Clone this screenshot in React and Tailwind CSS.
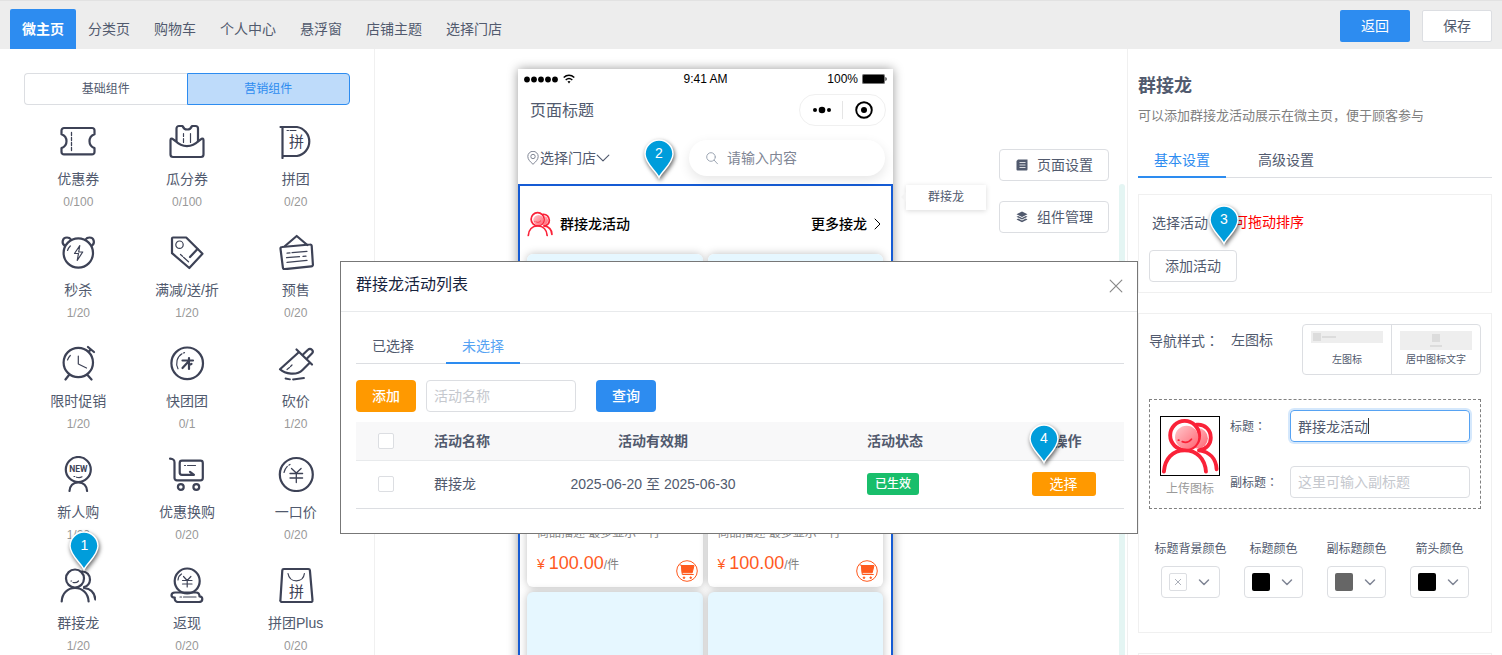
// src/pages/decorate/App.jsx
import { useState } from 'react';

// ─── Data ────────────────────────────────────────────────────────────────────
const NAV_TABS = ['微主页', '分类页', '购物车', '个人中心', '悬浮窗', '店铺主题', '选择门店'];

const WIDGETS = [
  { icon: 'coupon', name: '优惠券', count: '0/100' },
  { icon: 'split', name: '瓜分券', count: '0/100' },
  { icon: 'group', name: '拼团', count: '0/20' },
  { icon: 'seckill', name: '秒杀', count: '1/20' },
  { icon: 'discount', name: '满减/送/折', count: '1/20' },
  { icon: 'presale', name: '预售', count: '0/20' },
  { icon: 'timer', name: '限时促销', count: '1/20' },
  { icon: 'quick', name: '快团团', count: '0/1' },
  { icon: 'bargain', name: '砍价', count: '1/20' },
  { icon: 'newcomer', name: '新人购', count: '1/20' },
  { icon: 'exchange', name: '优惠换购', count: '0/20' },
  { icon: 'price', name: '一口价', count: '0/20' },
  { icon: 'chain', name: '群接龙', count: '1/20', pin: '1' },
  { icon: 'cashback', name: '返现', count: '0/20' },
  { icon: 'groupPlus', name: '拼团Plus', count: '0/20' },
];

const COLORS = [
  { label: '标题背景颜色', swatch: null },
  { label: '标题颜色', swatch: 'bg-black' },
  { label: '副标题颜色', swatch: 'bg-[#666666]' },
  { label: '箭头颜色', swatch: 'bg-black' },
];

// ─── Widget icons, 36 x 36 ───────────────────────────────────────────────────
const GLYPHS = {
  coupon: (
    <>
      <path d="M4 5h28a2.5 2.5 0 0 1 2.500 2.500v3.800c-3.600 1.400-5 3.600-5 6.900s1.400 5.500 5 6.900v3.800a2.500 2.500 0 0 1-2.500 2.500H4a2.500 2.500 0 0 1-2.500-2.500v-3.800c3.600-1.400 5-3.600 5-6.900s-1.400-5.500-5-6.900V7.500A2.500 2.500 0 0 1 4 5z" />
      <path d="M11.500 9.500v18" strokeWidth="1.300" strokeDasharray="3 2" />
    </>
  ),
  split: (
    <>
      <path d="M7.500 18.500V5.500A2.500 2.500 0 0 1 10 3h3.500c1 2.500 2.500 3.500 4.700 3.500S22 5.500 23 3h3.500A2.500 2.500 0 0 1 29 5.500v13" />
      <path d="M6.500 18 3.500 15.800c-1.200-.6-2 0-2 1.400v14.300A2.500 2.500 0 0 0 4 34h28a2.500 2.500 0 0 0 2.500-2.500V17.200c0-1.400-.8-2-2-1.400L29.500 18c-6.500 6.700-16.500 6.700-23 0z" />
      <path d="M14.500 10.500v3M14.500 15.500v4M21.500 10.500v9" strokeWidth="1.200" />
    </>
  ),
  group: (
    <>
      <path d="M2.500 4H19a14.700 14.700 0 0 1 0 29H4.500M4.500 4v31" />
      <path d="M9 7.500h1.500M12 7.500h6" strokeWidth="1" />
      <text x="18.500" y="24" fontSize="15" textAnchor="middle" fill="currentColor" stroke="none">拼</text>
    </>
  ),
  seckill: (
    <>
      <circle cx="18.300" cy="19" r="14.700" />
      <path d="M4.500 11.500C1.500 9.500 2 3.500 7 3.500c2 0 3.200.8 4 2M32 11.500c3-2 2.500-8-2.500-8-2 0-3.200.8-4 2" />
      <path d="m19.800 11.500-5.300 8h4l-1.300 7 5.500-8.500h-4z" strokeWidth="1.200" />
      <path d="M7.500 16.500c.6-1.800 1.500-3.200 2.800-4.500" strokeWidth="1.200" />
    </>
  ),
  discount: (
    <>
      <path d="M4 3.500h13.200L33.500 19.800 20.300 34 3 19.200V4.500a1 1 0 0 1 1-1z" />
      <circle cx="10.500" cy="10.700" r="3.700" strokeWidth="1.200" />
      <path d="m28.500 15-7.500 8" />
      <path d="m11.500 20.500 2 1.800M14.500 23.300l5 4.500" strokeWidth="1.200" />
    </>
  ),
  presale: (
    <>
      <path d="m7 12 11.700-10L29.300 11" />
      <path d="m4 13 28-2.500a1.500 1.500 0 0 1 1.700 1.300l1.200 18.700a1.700 1.700 0 0 1-1.600 1.900L6.700 35.200A1.700 1.700 0 0 1 4.900 33.700L2.500 14.800A1.600 1.600 0 0 1 4 13z" />
      <path d="m9 19.200 3-.3M14 18.700l15-1.400M8.500 23.700l13-1M25 22.400l3-.3M9 28.400l20-2" strokeWidth="1.200" />
    </>
  ),
  timer: (
    <>
      <circle cx="18.300" cy="17.500" r="14.700" />
      <path d="m9 30-3.500 4.500M27.500 30l4 4.500M28 2l6 5M30.500 4.500l-1.500 2" />
      <path d="M18.300 11v8l8.200 4" strokeWidth="1.200" />
      <path d="M7.500 15c.6-1.800 1.500-3.200 2.800-4.500" strokeWidth="1.200" />
    </>
  ),
  quick: (
    <>
      <circle cx="18.200" cy="18.300" r="15.800" />
      <path d="M13.500 15.500H24M20 13V24M19.500 16.500l-6 6.500M20 20l2.500-1" strokeWidth="2.200" />
      <path d="M13 8.800c-5 3-6.800 9.500-4 15M14.500 8l1-.4" strokeWidth="1.200" />
    </>
  ),
  bargain: (
    <>
      <path d="m18.500 4.500 15.500 15M20.500 7.500 2 24.300c5 4.800 17 6.500 22.500.7l7-7" />
      <path d="m25 9.500 5-4.700c1.300-1.300 2.800-1.100 3.900 0 1.100 1.100 1.200 2.500 0 3.700l-4.700 4.700" />
      <path d="m9 24.500 2.500-2M12.500 21.500l1.500-1.500" strokeWidth="1.200" />
      <path d="m7.500 33.500 4.500.9M15 34.500l11-1.500" strokeWidth="1.800" />
    </>
  ),
  newcomer: (
    <>
      <circle cx="18.300" cy="13.500" r="12.500" />
      <text x="18.300" y="16" fontSize="8.500" fontFamily="Roboto" fontWeight="700" textAnchor="middle" fill="currentColor" stroke="none">NEW</text>
      <path d="M14 20.500h.8M16.500 21.200c2 .7 4 .5 5.500-.4" strokeWidth="1.200" />
      <path d="M9.500 35c.3-5 3.500-8.700 8.800-8.700s8.500 3.700 8.800 8.700" />
    </>
  ),
  exchange: (
    <>
      <path d="M1 2.700c3.300.2 4.500 1 4.500 3.800V22A2.300 2.300 0 0 0 7.800 24.300h23.700A2.300 2.300 0 0 0 33.800 22V7a2.300 2.300 0 0 0-2.300-2.300H13A2.300 2.300 0 0 0 10.700 7v9.500a2.300 2.300 0 0 0 2.300 2.300h12l-4-3" />
      <path d="M15.500 9.500h1M18.500 9.500h8" strokeWidth="1.200" />
      <circle cx="11.800" cy="31" r="2.900" />
      <circle cx="27.300" cy="31" r="2.900" />
    </>
  ),
  price: (
    <>
      <circle cx="18.300" cy="18.500" r="16.500" />
      <path d="m13.500 12.500 4.800 4.500 4.800-4.500M12 17.500h12.600M12 22h12.600M18.300 17v9.500" strokeWidth="1.300" />
      <path d="M6 16.500c.8-3.500 2.800-6.300 6-8" strokeWidth="1.200" strokeDasharray="7 2" />
    </>
  ),
  chain: (
    <>
      <circle cx="15" cy="11.500" r="9" />
      <path d="M22 4.500c4.500-.3 8.200 3.500 8 8.200-.2 3.500-2.200 6.300-6 7.300" />
      <path d="M1.700 34.500C2 26.500 7.500 21 15 21s13.300 5.500 13.600 13.500M24 21c6.500.8 10.800 4.700 11.300 11.500" />
      <path d="M11 14h.6M13 15.500c2 .5 4 .2 5.500-1.500" strokeWidth="1.200" />
    </>
  ),
  cashback: (
    <>
      <circle cx="18.200" cy="14" r="12.500" />
      <path d="m14.500 9.500 3.700 4 3.700-4M13.500 13.500h9.500M13.500 17h9.500M18.200 13.500V20" strokeWidth="1.200" />
      <path d="M9 13c.2-2.700 1.400-4.800 3.500-6" strokeWidth="1.200" />
      <path d="M9.500 25.500H6c-2.500 0-3.500 1.200-3.500 2.700s1.300 2.300 3.300 2.300c-.5 2.500.8 4.500 3.200 4.500h21c2 0 3.300-1.200 3.300-3 0-1.600-1-2.600-2.800-2.600 0-2.500-1.500-3.900-3.500-3.900z" />
      <path d="M11 30h1.500M14.500 30H27" strokeWidth="1.200" />
    </>
  ),
  groupPlus: (
    <>
      <path d="M5.800 2h24.600a1.500 1.500 0 0 1 1.500 1.400l2.600 29.800a1.600 1.600 0 0 1-1.600 1.800H4a1.600 1.600 0 0 1-1.600-1.800L4.300 3.400A1.500 1.500 0 0 1 5.800 2z" />
      <path d="M10 6.500c.8 4.600 4 7.300 8.400 7.300s7.400-2.700 8-7.300" strokeWidth="1.200" />
      <text x="18.500" y="30" fontSize="15" textAnchor="middle" fill="currentColor" stroke="none">拼</text>
    </>
  ),
};

function WidgetIcon({ name }) {
  return (
    <svg
      className="h-9 w-9 text-[#3d4256]"
      viewBox="0 0 36 36"
      fill="none"
      stroke="currentColor"
      strokeWidth="2.200"
      strokeLinecap="round"
      strokeLinejoin="round"
      aria-hidden="true"
    >
      {GLYPHS[name]}
    </svg>
  );
}

// Red two-person logo of the component
function PeopleLogo({ id, className }) {
  return (
    <svg className={className} viewBox="0 0 60 60" fill="none" stroke="#fa2238" strokeWidth="4" strokeLinecap="round" aria-hidden="true">
      <defs>
        <linearGradient id={id} x1="0" y1="0" x2="1" y2="1">
          <stop offset="0" stopColor="#ffc9cd" />
          <stop offset="1" stopColor="#ff6472" />
        </linearGradient>
      </defs>
      <circle cx="38" cy="22" r="10.500" fill={`url(#${id})`} stroke="none" />
      <path d="M37 8c8-.8 14.500 5 14.500 13.500 0 6.500-4.500 11.500-12 13" />
      <circle cx="24.500" cy="19" r="15" fill="#fff" />
      <circle cx="26.500" cy="21" r="12" fill={`url(#${id})`} stroke="none" />
      <path d="M18 24h.5M22 25.500c3.500 1.500 7 .5 9.500-2.500" strokeWidth="1.800" />
      <path d="M3 56.500C4 43 12 34.500 24.500 34.500S45.500 43 46.500 56.500M39.500 34.500C50 36 57 43 57.500 54" />
    </svg>
  );
}

// ─── Step marker ─────────────────────────────────────────────────────────────
function Pin({ n, className }) {
  return (
    <div className={`pointer-events-none absolute z-20 h-10 w-[30px] ${className}`}>
      <svg className="absolute inset-0 overflow-visible drop-shadow-[1px_2px_2px_rgba(0,0,0,0.6)]" viewBox="0 0 30 40" aria-hidden="true">
        <path
          d="M15 38.500C12.500 32.500 1 24.500 1 15a14 14 0 0 1 28 0c0 9.500-11.500 17.500-14 23.500z"
          fill="#009ddb"
          stroke="#fff"
          strokeWidth="1.500"
        />
      </svg>
      <span className="relative block text-center text-sm leading-7 text-white">{n}</span>
    </div>
  );
}

function Chevron({ className, d = 'm1 3.500 5 5 5-5' }) {
  return (
    <svg className={className} viewBox="0 0 12 12" fill="none" stroke="currentColor" strokeLinecap="round" strokeLinejoin="round" aria-hidden="true">
      <path d={d} />
    </svg>
  );
}

// Full-width colon, centred in its cell
function Colon() {
  return <span className="font-['Noto_Sans_CJK_TC',sans-serif]">：</span>;
}

// ─── Top bar ─────────────────────────────────────────────────────────────────
function TopBar() {
  return (
    <header className="flex h-[49px] shrink-0 items-end justify-between border-t border-[#e2e2e2] bg-[#ededed] px-2.5">
      <nav className="flex">
        {NAV_TABS.map((tab, i) => (
          <a
            key={tab}
            href="#"
            className={
              i === 0
                ? 'rounded-t-xs bg-[#2d8cf0] px-3 text-sm leading-10 font-bold text-white'
                : 'px-3 text-sm leading-10 text-[#515a6e]'
            }
          >
            {tab}
          </a>
        ))}
      </nav>
      <div className="flex gap-3 pb-[7px]">
        <button className="h-8 w-[70px] rounded-xs bg-[#2d8cf0] text-sm text-white">返回</button>
        <button className="h-8 w-[70px] rounded-xs border border-[#dcdee2] bg-white text-sm">保存</button>
      </div>
    </header>
  );
}

// ─── Widget library ──────────────────────────────────────────────────────────
function WidgetPanel() {
  return (
    <aside className="w-[375px] shrink-0 border-r border-[#f0f0f0] px-6 pt-6">
      <div className="flex h-8 text-xs">
        <button className="flex-1 rounded-l border border-r-0 border-[#dcdee2]">基础组件</button>
        <button className="flex-1 rounded-r border border-[#2d8cf0] bg-[#bedbfa] text-[#2d8cf0]">营销组件</button>
      </div>
      <ul className="mt-[18px] grid grid-cols-3 gap-y-[23px]">
        {WIDGETS.map((w) => (
          <li key={w.name} className="relative flex flex-col items-center">
            <WidgetIcon name={w.icon} />
            <span className="mt-2.5 text-sm leading-5">{w.name}</span>
            <span className="mt-1 text-xs leading-[18px] text-[#999]">{w.count}</span>
            {w.pin && <Pin n={w.pin} className="-top-9 left-1/2 -ml-[9px]" />}
          </li>
        ))}
      </ul>
    </aside>
  );
}

// ─── Phone preview ───────────────────────────────────────────────────────────
function ProductCard() {
  return (
    <div className="rounded-md bg-white shadow-[0_0_8px_rgba(0,0,0,0.25)]">
      <div className="h-[260px] rounded-t-md bg-[#e6f7ff]" />
      <div className="pt-2.5 pr-[5px] pb-[5px] pl-2.5">
        <p className="text-xs leading-[18px] text-[#888]">商品描述 最多显示一行</p>
        <div className="mt-[9px] flex h-[31px] justify-between">
          <p className="text-sm leading-6 text-[#ff5a1e]">
            ¥ <span className="text-lg leading-6">100.00</span>
            <span className="text-xs text-[#808080]">/件</span>
          </p>
          <button className="self-end" aria-label="加入购物车">
            <svg className="h-[22px] w-[22px]" viewBox="0 0 22 22" fill="none" stroke="#ff5a1e">
              <circle cx="11" cy="11" r="10.300" />
              <path d="M4 5h1.300l1 9.500h11" strokeLinecap="round" />
              <path d="M5.500 5.500H18l-1.800 7.300H6.300z" fill="#ff5a1e" />
              <circle cx="8" cy="17.700" r=".8" fill="#ff5a1e" />
              <circle cx="14.700" cy="17.700" r=".8" fill="#ff5a1e" />
            </svg>
          </button>
        </div>
      </div>
    </div>
  );
}

function EmptyCard() {
  return <div className="h-[260px] rounded-md bg-[#e6f7ff] shadow-[0_0_8px_rgba(0,0,0,0.25)]" />;
}

function Phone() {
  return (
    <section className="relative w-[375px] shrink-0 self-start bg-white shadow-[0_0_10px_rgba(0,0,0,0.4)]">
      <div className="flex h-5 items-center px-1.5 text-xs text-black">
        <div className="flex flex-1 items-center gap-1">
          <svg className="h-[7px] w-[35px]" viewBox="0 0 35 7" aria-hidden="true">
            {[3, 10, 17, 24, 31].map((cx) => (
              <circle key={cx} cx={cx} cy="3.500" r="2.900" />
            ))}
          </svg>
          <svg className="h-3 w-3" viewBox="0 0 12 12" fill="none" stroke="#000" strokeWidth="1.500" aria-hidden="true">
            <path d="M.7 4.500c3.200-2.900 7.400-2.900 10.600 0M2.700 7c2-1.800 4.600-1.800 6.600 0" />
            <path d="M4.500 8.600c1-.7 2-.7 3 0L6 10.400z" fill="#000" stroke="none" />
          </svg>
        </div>
        <span>9:41 AM</span>
        <div className="flex flex-1 items-center justify-end gap-1">
          <span>100%</span>
          <svg className="h-[10px] w-[25px]" viewBox="0 0 25 10" aria-hidden="true">
            <rect width="23" height="10" rx="1.500" fill="#777" />
            <rect x="1" y="1" width="21" height="8" rx="1" />
            <path d="M23.500 3c1.500.5 1.500 3.500 0 4z" />
          </svg>
        </div>
      </div>

      <div className="flex h-[42px] items-center justify-between pr-[7px] pl-3">
        <span className="pt-0.5 text-base leading-6">页面标题</span>
        <div className="flex h-8 w-[87px] items-center rounded-full border border-[#f0f0f0]">
          <svg className="h-5 flex-1" viewBox="0 0 42 20" aria-hidden="true">
            <circle cx="15" cy="10" r="2" />
            <circle cx="22" cy="10" r="3.300" />
            <circle cx="29" cy="10" r="2" />
          </svg>
          <span className="h-[18px] w-px bg-[#e5e5e5]" />
          <svg className="h-5 flex-1" viewBox="0 0 42 20" aria-hidden="true">
            <circle cx="21" cy="10" r="7.800" fill="none" stroke="#000" strokeWidth="1.900" />
            <circle cx="21" cy="10" r="3" />
          </svg>
        </div>
      </div>

      <div className="flex h-[53px] items-center justify-between px-2">
        <button className="flex items-center text-sm">
          <svg className="h-3.5 w-3.5" viewBox="0 0 14 14" fill="none" stroke="#808695" aria-hidden="true">
            <path d="M7 13.300C4.500 11 1.800 8.500 1.800 5.500a5.200 5.200 0 0 1 10.400 0c0 3-2.700 5.500-5.200 7.800z" />
            <circle cx="7" cy="5.500" r="2.200" />
          </svg>
          选择门店
          <Chevron className="h-3.5 w-3.5" />
        </button>
        <label className="flex h-9 w-[196px] items-center gap-2 rounded-full bg-white px-4 shadow-[0_4px_12px_rgba(0,0,0,0.1)]">
          <svg className="h-3.5 w-3.5 shrink-0" viewBox="0 0 14 14" fill="none" stroke="#9ea7b4" strokeLinecap="round" aria-hidden="true">
            <circle cx="6" cy="6" r="4.300" />
            <path d="m9.300 9.300 3.200 3.500" />
          </svg>
          <input
            className="w-full bg-transparent text-sm outline-none placeholder:text-[#808695]"
            placeholder="请输入内容"
            aria-label="搜索"
          />
        </label>
      </div>

      <div className="border-2 border-[#155bd4] pr-2 pl-[7px] text-black">
        <div className="flex h-[68px] items-center pt-2 text-sm font-medium">
          <PeopleLogo id="logo-phone" className="h-[26px] w-[26px]" />
          <span className="ml-[7px]">群接龙活动</span>
          <a href="#" className="ml-auto flex items-center gap-1">
            更多接龙
            <Chevron className="h-3 w-3" d="m4 1 5 5-5 5" />
          </a>
        </div>
        <div className="grid grid-cols-2 gap-[5px] pb-2">
          <ProductCard />
          <ProductCard />
          <EmptyCard />
          <EmptyCard />
        </div>
      </div>
      <Pin n="2" className="top-[70px] left-[126px]" />
    </section>
  );
}

function Canvas() {
  return (
    <main className="flex min-w-0 flex-1 pt-5 pl-[143px]">
      <Phone />
      <div className="relative mt-[116px] ml-[13px] h-[25px] w-20 shrink-0 bg-white text-center text-xs leading-[25px] shadow-[0_1px_5px_rgba(0,0,0,0.15)]">
        群接龙
        <span className="absolute top-[7px] -left-[5px] border-y-[5px] border-r-[5px] border-y-transparent border-r-[#f3f3f3]" />
      </div>
      <div className="mt-20 ml-[13px] flex w-[110px] shrink-0 flex-col gap-5">
        <button className="flex h-8 items-center justify-center gap-2 rounded border border-[#dcdee2] text-sm">
          <svg className="h-3.5 w-3.5" viewBox="0 0 14 14" fill="currentColor" aria-hidden="true">
            <path d="M3 1.500h9.500v10a1 1 0 0 1-1 1h-9a1 1 0 0 1-1-1V3z" />
            <path d="M4.500 4.500h6M4.500 7h6M4.500 9.500h6" stroke="#fff" strokeWidth=".8" />
          </svg>
          页面设置
        </button>
        <button className="flex h-8 items-center justify-center gap-2 rounded border border-[#dcdee2] text-sm">
          <svg className="h-3.5 w-3.5" viewBox="0 0 14 14" fill="currentColor" aria-hidden="true">
            <path d="m7 1.500 5.500 2.700L7 7 1.500 4.200z" />
            <path d="m1.500 6.800 1.700-.8L7 8l3.800-2 1.700.8L7 9.600zM1.500 9.400l1.700-.8L7 10.600l3.800-2 1.700.8L7 12.200z" />
          </svg>
          组件管理
        </button>
      </div>
      <div className="mt-[115px] mr-0.5 ml-auto w-1.5 rounded-t bg-[#e4f5f3]" />
    </main>
  );
}

// ─── Settings ────────────────────────────────────────────────────────────────
function SettingsPanel() {
  const [title, setTitle] = useState('群接龙活动');

  return (
    <aside className="w-[375px] shrink-0 border-l border-[#f0f0f0] px-2.5 pt-[23px]">
      <h2 className="text-lg leading-7 font-bold">群接龙</h2>
      <p className="mt-1.5 text-[13px] leading-5 text-[#808080]">可以添加群接龙活动展示在微主页，便于顾客参与</p>

      <div className="mt-4 flex h-9 gap-4 border-b border-[#dcdee2] text-sm">
        <button className="-mb-px border-b-2 border-[#2d8cf0] px-4 pt-px text-[#2d8cf0]">基本设置</button>
        <button className="px-4">高级设置</button>
      </div>

      <section className="relative mt-4 border border-[#f0f0f0] px-2.5 pt-[17px] pb-2.5 text-sm">
        <div className="flex gap-3 px-[3px] leading-5">
          <span>选择活动<Colon /></span>
          <span className="text-[#ff0000]">可拖动排序</span>
        </div>
        <button className="mt-[17px] h-8 w-[88px] rounded border border-[#dcdee2]">添加活动</button>
        <Pin n="3" className="top-2.5 left-[70px]" />
      </section>

      <section className="mt-5 border border-[#f0f0f0] px-2.5 pt-2.5 pb-[34px]">
        <div className="flex text-sm leading-[21px]">
          <span className="pt-1.5">导航样式<Colon /></span>
          <span className="ml-3 pt-1.5">左图标</span>
          <div className="ml-auto flex h-[51px] rounded border border-[#dcdee2] text-[10px]">
            <button className="flex w-[88px] flex-col items-center pt-1.5">
              <span className="flex h-3 w-[72px] items-center bg-[#eee] pl-0.5">
                <span className="h-2 w-2 bg-[#dcdcdc]" />
                <span className="ml-px h-0.5 w-3.5 bg-[#dcdcdc]" />
              </span>
              <span className="mt-2.5 leading-3.5">左图标</span>
            </button>
            <button className="flex w-[89px] flex-col items-center border-l border-[#dcdee2] pt-1.5">
              <span className="flex h-[19px] w-[72px] flex-col items-center gap-[3px] bg-[#eee] pt-[3px]">
                <span className="h-2 w-2 bg-[#dcdcdc]" />
                <span className="h-0.5 w-3 bg-[#dcdcdc]" />
              </span>
              <span className="mt-[3px] leading-3.5">居中图标文字</span>
            </button>
          </div>
        </div>

        <div className="mt-6 flex h-[110px] border border-dashed border-[#808080] px-2.5 text-xs">
          <button className="flex w-[60px] flex-col items-center pt-4 text-[#999]">
            <span className="block h-[60px] w-[60px] border border-black">
              <PeopleLogo id="logo-upload" className="h-full w-full" />
            </span>
            <span className="mt-1 leading-[18px]">上传图标</span>
          </button>
          <div className="ml-2.5 flex flex-1 flex-col gap-6 pt-2.5">
            <div className="flex h-8 justify-between">
              <label htmlFor="title" className="pt-[7px] leading-[18px]">标题<Colon /></label>
              <div className="relative w-[180px]">
                <input
                  id="title"
                  className="h-8 w-full rounded border border-[#57a3f3] px-[7px] text-sm caret-transparent shadow-[0_0_0_2px_rgba(45,140,240,0.2)] outline-none"
                  value={title}
                  onChange={(e) => setTitle(e.target.value)}
                />
                <span className="absolute top-2 left-[78px] h-4 w-px bg-[#333]" />
              </div>
            </div>
            <div className="flex h-8 justify-between">
              <label htmlFor="subtitle" className="pt-[7px] leading-[18px]">副标题<Colon /></label>
              <input
                id="subtitle"
                className="h-8 w-[180px] rounded border border-[#dcdee2] px-[7px] text-sm outline-none placeholder:text-[#c5c8ce]"
                placeholder="这里可输入副标题"
              />
            </div>
          </div>
        </div>

        <div className="mt-[31px] grid grid-cols-4 text-xs">
          {COLORS.map((c) => (
            <div key={c.label} className="flex flex-col items-center gap-2 leading-[18px]">
              <span>{c.label}</span>
              <button
                className="flex h-8 w-[59px] items-center justify-between rounded border border-[#dcdee2] pr-[9px] pl-[7px] text-[#808695]"
                aria-label={c.label}
              >
                {c.swatch ? (
                  <span className={`h-[18px] w-[18px] rounded-xs ${c.swatch}`} />
                ) : (
                  <span className="flex h-[18px] w-[18px] items-center justify-center rounded-xs border border-[#dcdee2]">
                    <Chevron className="h-2 w-2" d="m2 2 8 8M10 2l-8 8" />
                  </span>
                )}
                <Chevron className="h-3 w-3 stroke-[1.5]" d="m1.500 4 4.500 4.500L10.500 4" />
              </button>
            </div>
          ))}
        </div>
      </section>

      <section className="mt-5 h-24 border border-[#f0f0f0]" />
    </aside>
  );
}

// ─── Activity picker dialog ──────────────────────────────────────────────────
function Checkbox({ label }) {
  return (
    <input
      type="checkbox"
      aria-label={label}
      className="block h-4 w-4 appearance-none rounded-xs border border-[#dcdee2] bg-white checked:bg-[#2d8cf0]"
    />
  );
}

function ActivityDialog() {
  return (
    <div role="dialog" aria-label="群接龙活动列表" className="absolute top-[261px] left-[340px] z-10 w-[798px] border border-[#777] bg-white">
      <div className="flex h-[50px] items-center justify-between border-b border-[#e8eaec] pr-3.5 pb-0.5 pl-[15px]">
        <h3 className="pb-0.5 text-base leading-6 text-[#17233d]">群接龙活动列表</h3>
        <button aria-label="关闭">
          <Chevron className="h-3.5 w-3.5 text-[#888]" d="m1 1 10 10M11 1 1 11" />
        </button>
      </div>

      <div className="pt-4 pr-[13px] pb-6 pl-[15px]">
        <div className="flex h-9 gap-4 border-b border-[#dcdee2] text-sm">
          <button className="px-4">已选择</button>
          <button className="-mb-px border-b-2 border-[#2d8cf0] px-4 pt-px text-[#57a3f3]">未选择</button>
        </div>

        <div className="mt-4 flex text-sm">
          <button className="h-8 w-[60px] rounded bg-[#ff9900] font-medium text-white">添加</button>
          <input
            className="ml-2.5 h-8 w-[150px] rounded border border-[#dcdee2] px-[7px] outline-none placeholder:text-[#c5c8ce]"
            placeholder="活动名称"
            aria-label="活动名称"
          />
          <button className="ml-5 h-8 w-[60px] rounded bg-[#2d8cf0] font-medium text-white">查询</button>
        </div>

        <table className="mt-2.5 w-full table-fixed border-collapse text-sm">
          <colgroup>
            <col className="w-[60px]" />
            <col className="w-[111px]" />
            <col className="w-[252px]" />
            <col className="w-[232px]" />
            <col />
          </colgroup>
          <thead>
            <tr className="h-[38px] border-b border-[#e8eaec] bg-[#f8f8f9]">
              <th className="pl-[22px]"><Checkbox label="全选" /></th>
              <th className="pl-[18px] text-left font-bold">活动名称</th>
              <th className="font-bold">活动有效期</th>
              <th className="font-bold">活动状态</th>
              <th className="font-bold">操作</th>
            </tr>
          </thead>
          <tbody>
            <tr className="h-12 border-b border-[#dcdee2]">
              <td className="pl-[22px]"><Checkbox label="群接龙" /></td>
              <td className="pl-[18px]">群接龙</td>
              <td className="text-center">2025-06-20 至 2025-06-30</td>
              <td className="pr-1 text-center">
                <span className="inline-block h-[22px] rounded-[3px] bg-[#19be6b] px-2 align-middle text-xs leading-[22px] font-medium text-white">
                  已生效
                </span>
              </td>
              <td className="pr-2">
                <button className="mx-auto block h-6 w-16 rounded-[3px] bg-[#ff9900] text-sm leading-6 text-white">选择</button>
              </td>
            </tr>
          </tbody>
        </table>
      </div>
      <Pin n="4" className="top-[162px] left-[688px]" />
    </div>
  );
}

export default function App() {
  return (
    <div className="relative flex h-screen flex-col overflow-hidden bg-white font-['Liberation_Sans','Noto_Sans_CJK_SC',sans-serif] text-[#515a6e]">
      <TopBar />
      <div className="flex min-h-0 flex-1">
        <WidgetPanel />
        <Canvas />
        <SettingsPanel />
      </div>
      <ActivityDialog />
    </div>
  );
}
